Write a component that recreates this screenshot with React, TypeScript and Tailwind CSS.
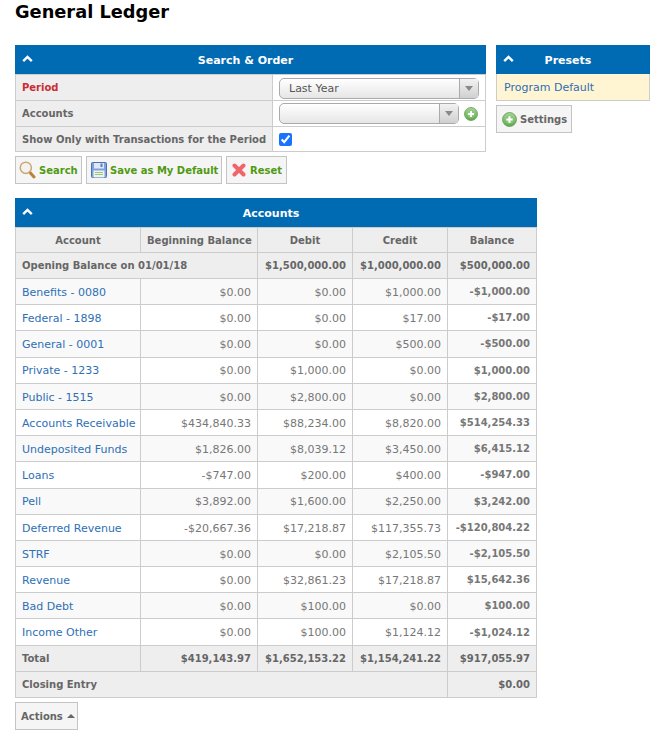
import React from "react";

const rows = [
  ["Benefits - 0080", "$0.00", "$0.00", "$1,000.00", "-$1,000.00"],
  ["Federal - 1898", "$0.00", "$0.00", "$17.00", "-$17.00"],
  ["General - 0001", "$0.00", "$0.00", "$500.00", "-$500.00"],
  ["Private - 1233", "$0.00", "$1,000.00", "$0.00", "$1,000.00"],
  ["Public - 1515", "$0.00", "$2,800.00", "$0.00", "$2,800.00"],
  ["Accounts Receivable", "$434,840.33", "$88,234.00", "$8,820.00", "$514,254.33"],
  ["Undeposited Funds", "$1,826.00", "$8,039.12", "$3,450.00", "$6,415.12"],
  ["Loans", "-$747.00", "$200.00", "$400.00", "-$947.00"],
  ["Pell", "$3,892.00", "$1,600.00", "$2,250.00", "$3,242.00"],
  ["Deferred Revenue", "-$20,667.36", "$17,218.87", "$117,355.73", "-$120,804.22"],
  ["STRF", "$0.00", "$0.00", "$2,105.50", "-$2,105.50"],
  ["Revenue", "$0.00", "$32,861.23", "$17,218.87", "$15,642.36"],
  ["Bad Debt", "$0.00", "$100.00", "$0.00", "$100.00"],
  ["Income Other", "$0.00", "$100.00", "$1,124.12", "-$1,024.12"],
];

const Chevron = () => (
  <svg width="11" height="8" viewBox="0 0 11 8" className="absolute left-[7px] top-[10px]">
    <path d="M1.2 6.2 L5.5 2 L9.8 6.2" fill="none" stroke="#fff" strokeWidth="2.4" />
  </svg>
);

const PlusCircle = ({ size, id }: { size: number; id: string }) => (
  <svg width={size} height={size} viewBox="0 0 16 16">
    <defs>
      <linearGradient id={id} x1="0" y1="0" x2="0" y2="1">
        <stop offset="0" stopColor="#a9d69a" />
        <stop offset="1" stopColor="#5fa84e" />
      </linearGradient>
    </defs>
    <circle cx="8" cy="8" r="7.4" fill={`url(#${id})`} stroke="#5b9c4c" strokeWidth="0.9" />
    <circle cx="8" cy="8" r="4.2" fill="#8cc47c" />
    <path d="M8 4.6 V11.4 M4.6 8 H11.4" stroke="#fff" strokeWidth="2.2" />
  </svg>
);

const Magnifier = () => (
  <svg width="17" height="18" viewBox="0 0 17 18">
    <path d="M11 11.5 L15 16" stroke="#b8813c" strokeWidth="3" strokeLinecap="round" />
    <circle cx="6.8" cy="6.8" r="5.6" fill="#f2f3ee" stroke="#cda677" strokeWidth="1.5" />
  </svg>
);

const Floppy = () => (
  <svg width="16" height="16" viewBox="0 0 16 16">
    <rect x="0.5" y="0.5" width="15" height="15" rx="1" fill="#7ea3dc" stroke="#4a72b4" />
    <rect x="3" y="1" width="10" height="5.5" fill="#dfe8f6" />
    <rect x="9.5" y="1.5" width="2" height="3.5" fill="#5a7fbc" />
    <rect x="2.5" y="8.5" width="11" height="7" fill="#eef5e8" />
    <path d="M4 10.5 H12 M4 12.5 H12" stroke="#9ac28a" strokeWidth="1" />
  </svg>
);

const RedX = () => (
  <svg width="14" height="14" viewBox="0 0 14 14">
    <path d="M2.5 2.5 L11.5 11.5 M11.5 2.5 L2.5 11.5" stroke="#f0656a" strokeWidth="4" strokeLinecap="round" />
  </svg>
);

const Btn = ({ icon, label, cls }: { icon?: React.ReactNode; label: React.ReactNode; cls: string }) => (
  <button className={`flex h-[28px] items-center border border-[#c4c4c4] bg-[#f5f5f5] text-[10px] font-bold ${cls}`}>
    {icon}
    {label}
  </button>
);

const Combo = ({ width, value }: { width: string; value?: string }) => (
  <div className={`flex h-[21px] ${width} rounded-[5px] border border-[#aaaaaa] bg-gradient-to-b from-white to-[#e6e6e6] text-[11px] text-[#555555]`}>
    <span className="flex-1 pl-[9px] leading-[20px]">{value}</span>
    <span className="flex w-[19px] items-center justify-center border-l border-[#aaaaaa] bg-gradient-to-b from-[#f2f2f2] to-[#d0d0d0]">
      <span className="h-0 w-0 border-x-[4px] border-t-[5px] border-x-transparent border-t-[#888888]" />
    </span>
  </div>
);

const th = "border border-[#cccccc] bg-[#eeeeee] px-[6px] text-[10px] font-bold text-[#666666] whitespace-nowrap";
const td = "border border-[#cccccc] px-[6px] text-right text-[#777777] whitespace-nowrap";
const head = "relative flex h-[29px] items-center justify-center bg-[#006bb3] pr-[10px] pt-[3px] font-bold text-white";

export default function App() {
  return (
    <div className="min-h-[736px] bg-white font-['DejaVu_Sans',sans-serif] text-[11px]">
      <div className="flex h-[45px] items-start pl-[15px]">
        <h1 className="mt-[1px] text-[17.8px] font-bold leading-[22px] text-black">General Ledger</h1>
      </div>

      <div className="flex items-start pl-[15px]">
        <div className="w-[471px]">
          <div className={head}>
            <Chevron />
            Search &amp; Order
          </div>
          <table className="w-full table-fixed border-collapse">
            <colgroup>
              <col className="w-[257px]" />
              <col />
            </colgroup>
            <tbody>
              <tr className="h-[26px]">
                <td className={th}>
                  <span className="text-[#cc2c33]">Period</span>
                </td>
                <td className="border border-[#cccccc] pl-[6px] pt-[1px]">
                  <Combo width="w-[200px]" value="Last Year" />
                </td>
              </tr>
              <tr className="h-[26px]">
                <td className={th}>Accounts</td>
                <td className="border border-[#cccccc] pl-[6px]">
                  <div className="flex items-center gap-[5px]">
                    <Combo width="w-[180px]" />
                    <PlusCircle size={14} id="plus-a" />
                  </div>
                </td>
              </tr>
              <tr className="h-[25px]">
                <td className={th}>Show Only with Transactions for the Period</td>
                <td className="border border-[#cccccc] pl-[6px]">
                  <input type="checkbox" defaultChecked className="block h-[13px] w-[13px] accent-[#1a73ff]" />
                </td>
              </tr>
            </tbody>
          </table>
          <div className="mt-[4px] flex gap-[4px]">
            <Btn cls="w-[67px] pl-[3px] gap-[3px] text-[#4f9a12]" icon={<Magnifier />} label="Search" />
            <Btn cls="w-[136px] pl-[4px] gap-[3px] whitespace-nowrap text-[#4f9a12]" icon={<Floppy />} label="Save as My Default" />
            <Btn cls="w-[61px] pl-[5px] gap-[4px] text-[#4f9a12]" icon={<RedX />} label="Reset" />
          </div>
        </div>

        <div className="ml-[10px] w-[154px]">
          <div className={head}>
            <Chevron />
            Presets
          </div>
          <div className="flex h-[27px] items-center border border-t-0 border-[#cccccc] bg-[#fff5d2] pl-[7px] pt-[3px] text-[#2e6fb5]">
            Program Default
          </div>
          <Btn
            cls="mt-[4px] w-[76px] pl-[5px] gap-[3px] text-[#666666]"
            icon={<PlusCircle size={15} id="plus-b" />}
            label="Settings"
          />
        </div>
      </div>

      <div className="ml-[15px] mt-[14px] w-[522px]">
        <div className={head}>
          <Chevron />
          Accounts
        </div>
        <table className="w-full table-fixed border-collapse">
          <colgroup>
            <col className="w-[125px]" />
            <col className="w-[117px]" />
            <col className="w-[95px]" />
            <col className="w-[95px]" />
            <col />
          </colgroup>
          <tbody>
            <tr className="h-[25px]">
              {["Account", "Beginning Balance", "Debit", "Credit", "Balance"].map((h) => (
                <td key={h} className={`${th} text-center`}>
                  {h}
                </td>
              ))}
            </tr>
            <tr className="h-[26px]">
              <td colSpan={2} className={th}>
                Opening Balance on 01/01/18
              </td>
              <td className={`${th} text-right`}>$1,500,000.00</td>
              <td className={`${th} text-right`}>$1,000,000.00</td>
              <td className={`${th} text-right`}>$500,000.00</td>
            </tr>
            {rows.map((r, i) => (
              <tr key={r[0]} className={`h-[26.2px] ${i % 2 === 0 ? "bg-[#f9f9f9]" : "bg-white"}`}>
                <td className="border border-[#cccccc] px-[6px] pt-[3px] text-[#2e6fb5] whitespace-nowrap">{r[0]}</td>
                <td className={`${td} pt-[3px]`}>{r[1]}</td>
                <td className={`${td} pt-[3px]`}>{r[2]}</td>
                <td className={`${td} pt-[3px]`}>{r[3]}</td>
                <td className={`${td} text-[10px] font-bold text-[#666666]`}>{r[4]}</td>
              </tr>
            ))}
            <tr className="h-[26px]">
              <td className={th}>Total</td>
              <td className={`${th} text-right`}>$419,143.97</td>
              <td className={`${th} text-right`}>$1,652,153.22</td>
              <td className={`${th} text-right`}>$1,154,241.22</td>
              <td className={`${th} text-right`}>$917,055.97</td>
            </tr>
            <tr className="h-[26px]">
              <td colSpan={4} className={th}>
                Closing Entry
              </td>
              <td className={`${th} text-right`}>$0.00</td>
            </tr>
          </tbody>
        </table>
        <Btn
          cls="mt-[4px] w-[63px] pl-[5px] pt-[1px] gap-[4px] text-[#666666]"
          label={
            <>
              Actions
              <span className="mb-[1px] h-0 w-0 border-x-[4px] border-b-[4px] border-x-transparent border-b-[#666666]" />
            </>
          }
        />
      </div>
    </div>
  );
}
